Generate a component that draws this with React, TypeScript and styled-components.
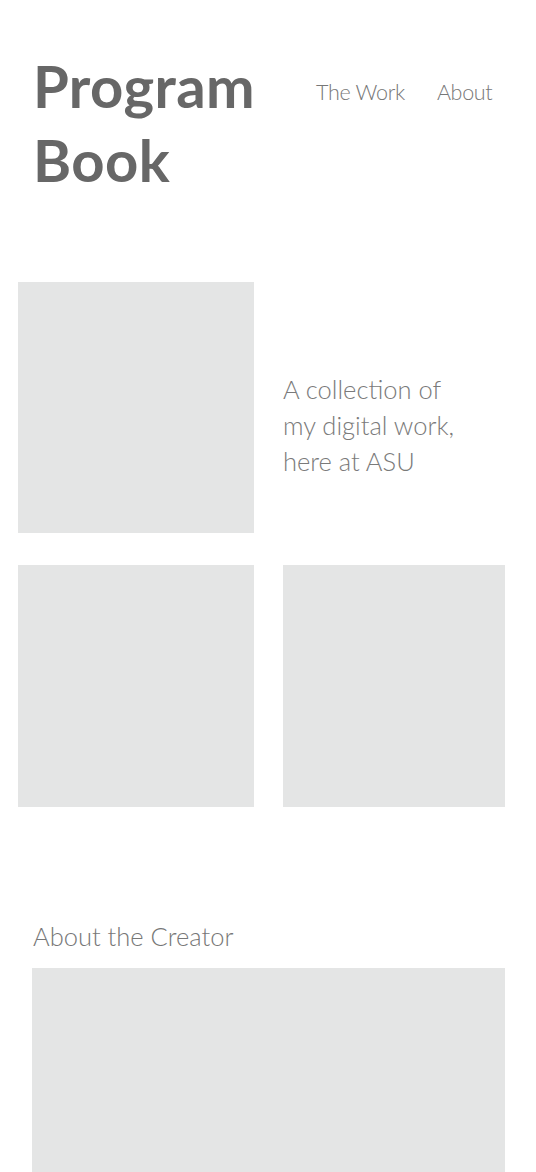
import React from "react";
import styled, { createGlobalStyle } from "styled-components";

const Global = createGlobalStyle`
  html, body { margin: 0; padding: 0; background: #ffffff; }
  body { font-family: "Lato", "Open Sans", sans-serif; overflow: hidden; }
`;

const Page = styled.div`
  width: 536px;
  height: 1172px;
  overflow: hidden;
  background: #fff;
`;

const Header = styled.header`
  display: flex;
  align-items: flex-start;
  padding: 49px 0 0 33px;
`;

const Title = styled.h1`
  margin: 0;
  width: 270px;
  flex: none;
  font-size: 58px;
  line-height: 74px;
  font-weight: 700;
  color: #676767;
  letter-spacing: 0.4px;
`;

const Nav = styled.nav`
  display: flex;
  gap: 32px;
  padding-top: 29px;
  margin-left: 13px;
`;

const NavLink = styled.a`
  font-size: 21.5px;
  line-height: 28px;
  font-weight: 300;
  color: #777777;
  text-decoration: none;
  letter-spacing: -0.3px;
`;

const Grid = styled.section`
  display: grid;
  grid-template-columns: 236px 222px;
  grid-template-rows: 251px 242px;
  column-gap: 29px;
  row-gap: 32px;
  margin: 85px 0 0 18px;
`;

const Placeholder = styled.div`
  background: #e4e5e5;
`;

const Intro = styled.p`
  margin: 0;
  align-self: center;
  padding-top: 35px;
  font-size: 25.5px;
  line-height: 36px;
  color: #7a7a7a;
  font-weight: 300;
`;

const About = styled.section`
  margin: 114px 31px 0 32px;
`;

const AboutHeading = styled.h2`
  margin: 0 0 17px 1px;
  font-size: 25.5px;
  line-height: 30px;
  font-weight: 300;
  color: #777777;
`;

const AboutBox = styled(Placeholder)`
  height: 240px;
`;

export default function App() {
  return (
    <Page>
      <Global />
      <Header>
        <Title>
          Program
          <br />
          Book
        </Title>
        <Nav>
          <NavLink href="#">The Work</NavLink>
          <NavLink href="#">About</NavLink>
        </Nav>
      </Header>
      <Grid>
        <Placeholder />
        <Intro>
          A collection of
          <br />
          my digital work,
          <br />
          here at ASU
        </Intro>
        <Placeholder />
        <Placeholder />
      </Grid>
      <About>
        <AboutHeading>About the Creator</AboutHeading>
        <AboutBox />
      </About>
    </Page>
  );
}
